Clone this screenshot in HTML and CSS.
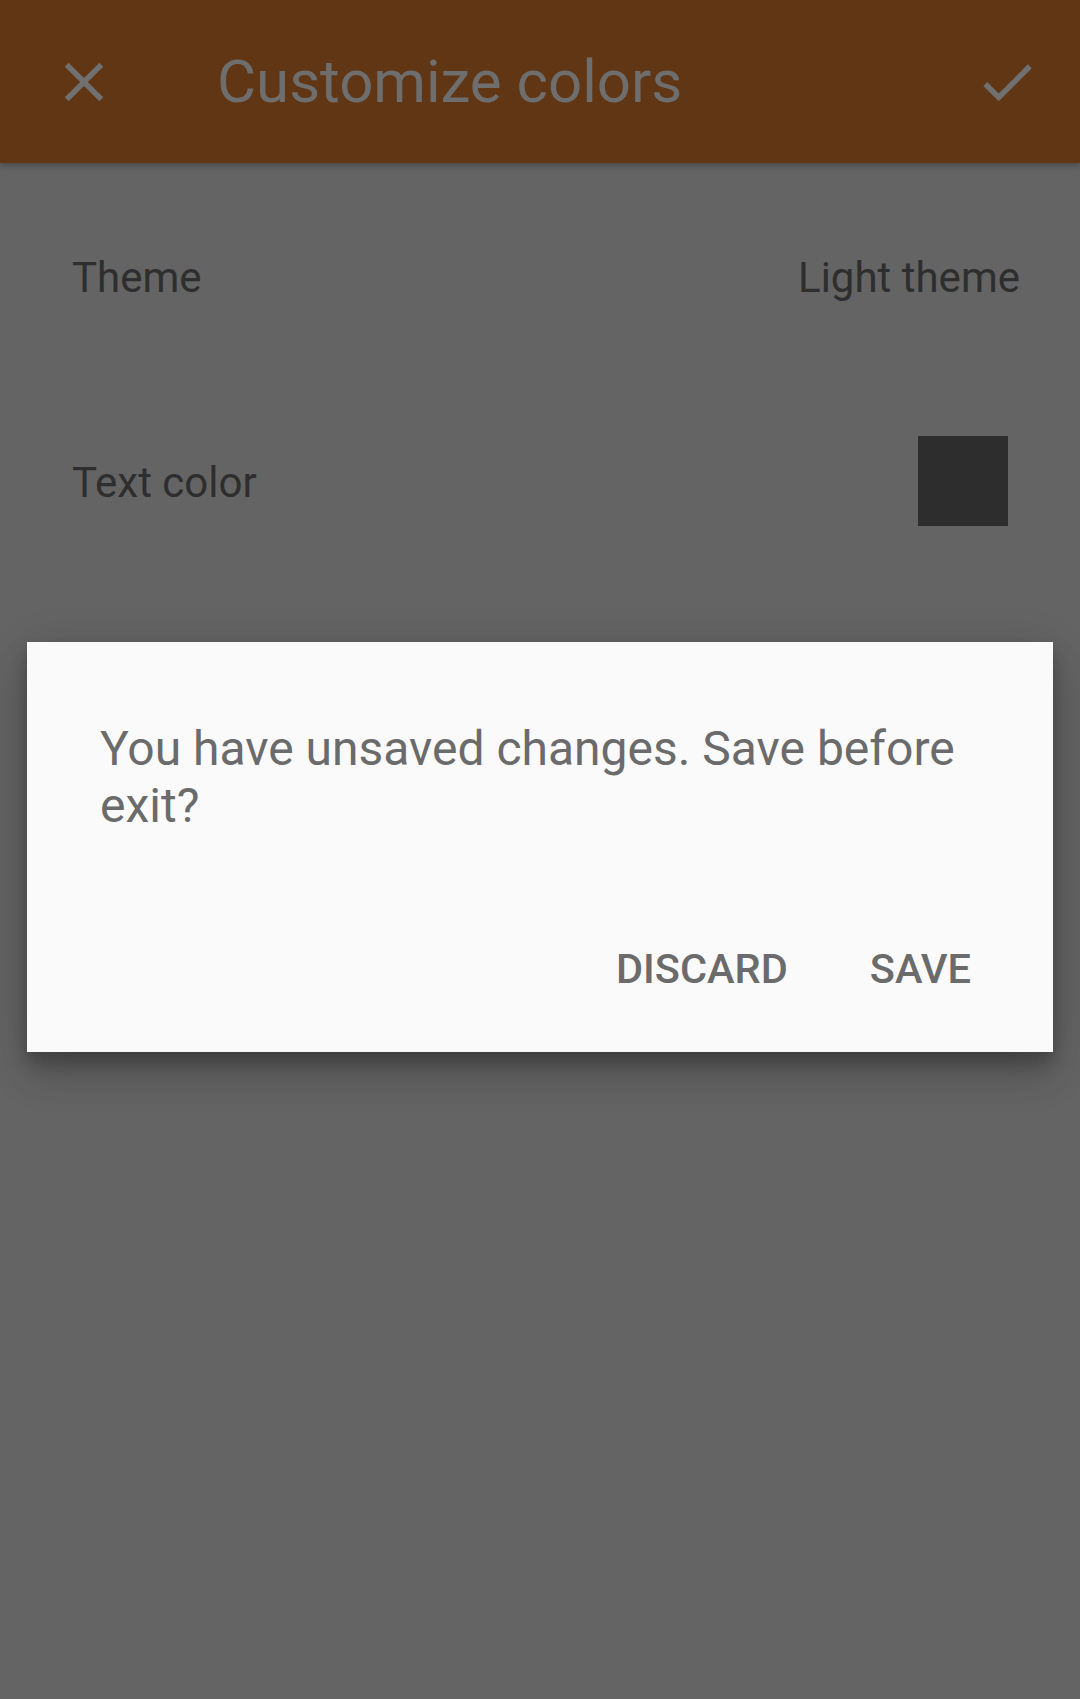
FILE: index.html
```html
<!DOCTYPE html>
<html>
<head>
<meta charset="utf-8">
<link rel="stylesheet" href="styles.css">
</head>
<body>
<div class="screen">
  <header class="toolbar">
    <svg class="icon icon-close" viewBox="0 0 24 24"><path d="M19 6.41L17.59 5 12 10.59 6.41 5 5 6.41 10.59 12 5 17.59 6.41 19 12 13.41 17.59 19 19 17.59 13.41 12z"/></svg>
    <h1 class="title">Customize colors</h1>
    <svg class="icon icon-check" viewBox="0 0 24 24"><path d="M9 16.17L4.83 12l-1.42 1.41L9 19 21 7l-1.41-1.41z"/></svg>
  </header>
  <main class="content">
    <div class="row row-theme">
      <span class="label">Theme</span>
      <span class="value">Light theme</span>
    </div>
    <div class="row row-color">
      <span class="label label-color">Text color</span>
      <span class="swatch"></span>
    </div>
  </main>
  <div class="dialog">
    <p class="message">You have unsaved changes. Save before exit?</p>
    <div class="actions">
      <span class="btn">DISCARD</span>
      <span class="btn">SAVE</span>
    </div>
  </div>
</div>
</body>
</html>
```
FILE: styles.css
```css
html, body {
  margin: 0;
  padding: 0;
}
body {
  background: #646464;
  font-family: Roboto, "Liberation Sans", sans-serif;
}
.screen {
  position: relative;
  width: 1080px;
  height: 1699px;
  overflow: hidden;
  background: #646464;
}
.toolbar {
  height: 163px;
  background: #613614;
  display: flex;
  align-items: center;
  padding: 0 40px 0 51px;
  box-shadow: 0 3px 6px rgba(0,0,0,0.25);
  position: relative;
  z-index: 1;
}
.icon {
  width: 66px;
  height: 66px;
  fill: #707070;
  flex: none;
}
.icon-check {
  margin-top: 1px;
}
.title {
  margin: 0 0 0 100px;
  flex: 1;
  font-weight: 400;
  font-size: 60px;
  line-height: 60px;
  color: #6e6e6e;
}
.content {
  padding: 90px 60px 0 72px;
}
.row {
  display: flex;
  justify-content: space-between;
  align-items: center;
  font-size: 42px;
  line-height: 50px;
  color: #2e2e2e;
}
.row-color {
  margin-top: 133px;
  height: 90px;
}
.label-color {
  margin-top: 4px;
}
.swatch {
  width: 90px;
  height: 90px;
  background: #2d2d2d;
  margin-right: 12px;
}
.dialog {
  position: absolute;
  left: 27px;
  top: 642px;
  width: 1026px;
  height: 410px;
  box-sizing: border-box;
  background: #fafafa;
  padding: 78px 73px 0 73px;
  box-shadow: 0 24px 38px rgba(0,0,0,0.14), 0 9px 46px rgba(0,0,0,0.12), 0 11px 15px rgba(0,0,0,0.2);
}
.message {
  margin: 0;
  font-size: 48px;
  line-height: 57px;
  color: #6b6b6b;
}
.actions {
  display: flex;
  justify-content: flex-end;
  gap: 82px;
  margin-top: 111px;
  margin-right: 9px;
}
.btn {
  font-size: 41.5px;
  line-height: 48px;
  font-weight: 500;
  color: #6b6b6b;
}
```
